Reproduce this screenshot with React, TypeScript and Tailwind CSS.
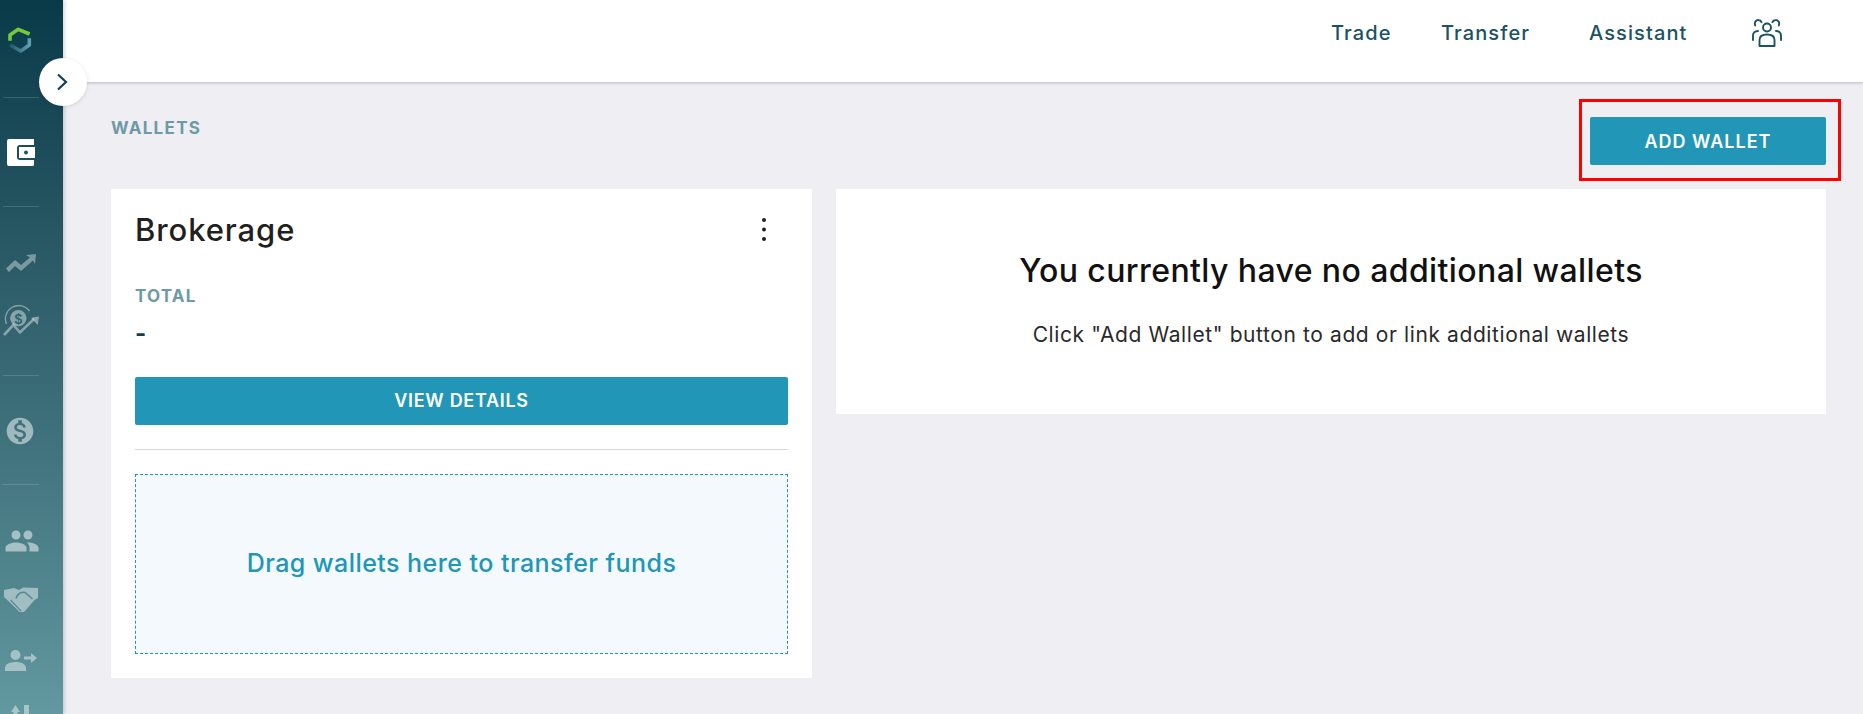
import { MdPeople, MdMonetizationOn } from "react-icons/md";

const font = { fontFamily: '"Inter", "Open Sans", "Liberation Sans", sans-serif' };

function Logo() {
  return (
    <svg width="24" height="26" viewBox="0 0 24 26" fill="none" strokeWidth="3.6" strokeLinejoin="round" className="block">
      <defs>
        <linearGradient id="lg" x1="1" y1="0" x2="0" y2="0">
          <stop offset="0" stopColor="#5c9fb0" />
          <stop offset="1" stopColor="#24596a" />
        </linearGradient>
      </defs>
      <path d="M2 13.7 V8 L10.3 2.3 L21.6 7" stroke="#76c83c" />
      <path d="M21.3 11.3 V18 L12.7 24 L2 18" stroke="url(#lg)" />
    </svg>
  );
}

function Wallet() {
  return (
    <svg width="28" height="27" viewBox="0 0 28 27" className="block">
      <path d="M2 0 H27 V6 H13 Q10 6 10 9 V18 Q10 21 13 21 H27 V26 Q27 27 25 27 H2 Q0 27 0 25 V2 Q0 0 2 0 Z" fill="#fff" />
      <path d="M12 8 H28 V19 H12 Z" fill="#fff" />
      <circle cx="19" cy="13.5" r="2" fill="#1c5563" />
    </svg>
  );
}

function Trend() {
  return (
    <svg width="30" height="18" viewBox="0 0 30 18" className="block" fill="#fff" fillOpacity="0.38">
      <path d="M0 14.5 L9 6 L15 11 L24 3.5 L20 1 L30 0 L29 10 L27 6.5 L15 17 L9 12 L3 18 Z" />
    </svg>
  );
}

function Coin() {
  return (
    <svg width="36" height="31" viewBox="0 0 36 31" className="block" fill="none">
      <path d="M3.5 19 A13.3 13.3 0 0 1 26.5 6" stroke="#fff" strokeOpacity="0.42" strokeWidth="1.3" />
      <circle cx="15.3" cy="13.3" r="8.2" fill="#fff" fillOpacity="0.42" />
      <text x="15.3" y="18.5" textAnchor="middle" fontSize="14" fontWeight="700" fill="#2d6570" fontFamily="Liberation Sans, sans-serif">$</text>
      <path d="M1 30 L10.3 20 L17 27.5 L31 14" stroke="#fff" strokeOpacity="0.42" strokeWidth="2.6" />
      <path d="M28 12.7 L36 11.5 L34.7 20 Z" fill="#fff" fillOpacity="0.42" />
    </svg>
  );
}

function Handshake() {
  return (
    <svg width="34" height="25" viewBox="0 0 34 25" className="block">
      <path d="M0 3 L10 1 L15 3 L19 0.5 L34 1 L34 11 L30.5 13 L20 25 L15.5 25 L8 17.5 L0 10 Z" fill="#fff" fillOpacity="0.45" />
      <path d="M12 11.5 C13.5 6.5 17.5 4.5 21 5.5 L28.5 12" stroke="#548b94" strokeWidth="1.6" fill="none" />
      <path d="M6.5 13 L17 24" stroke="#548b94" strokeWidth="1.2" fill="none" />
    </svg>
  );
}

function UserArrow() {
  return (
    <svg width="32" height="21" viewBox="0 0 32 21" className="block" fill="#fff" fillOpacity="0.45">
      <circle cx="10.5" cy="5" r="5" />
      <path d="M0 21 V18 C0 14 5 12 10.5 12 C16 12 21 14 21 18 V21 Z" />
      <path d="M19 6.5 H26 V3 L32 8 L26 13 V9.5 H19 Z" />
    </svg>
  );
}

function LastIcon() {
  return (
    <svg width="18" height="18" viewBox="0 0 18 18" className="block" fill="#fff" fillOpacity="0.45">
      <path d="M0 7 L4.5 0 L9 7 H6.5 V18 H2.5 V7 Z" />
      <rect x="13" y="0" width="5" height="18" />
    </svg>
  );
}

function HeaderUsers() {
  return (
    <svg width="30" height="28" viewBox="0 0 30 28" fill="none" stroke="#1b5363" strokeWidth="1.9" strokeLinecap="round" strokeLinejoin="round" className="block">
      <circle cx="15" cy="8.5" r="4" />
      <path d="M7.5 27 V21 C7.5 17.5 10.5 15.5 15 15.5 C19.5 15.5 22.5 17.5 22.5 21 V27 Z" />
      <path d="M3.2 6.5 C1.8 3 4.5 0.8 6.5 1 C8 1.1 9 2 9.5 3.2" />
      <path d="M26.8 6.5 C28.2 3 25.5 0.8 23.5 1 C22 1.1 21 2 20.5 3.2" />
      <path d="M1 21 V16.5 C1 14 3 12 6 12" />
      <path d="M29 21 V16.5 C29 14 27 12 24 12" />
    </svg>
  );
}

function Rule({ className }: { className: string }) {
  return <div className={`mx-[3px] h-px w-[36px] bg-white/15 ${className}`} />;
}

export default function App() {
  return (
    <div style={font} className="relative flex h-[714px] w-[1863px] overflow-hidden bg-[#eeeef3]">
      <aside className="z-20 h-full w-[63px] shrink-0 overflow-hidden bg-gradient-to-b from-[#083a48] to-[#62989f] shadow-[2px_0_3px_rgba(0,0,0,0.14)]">
        <div className="ml-[8px] mt-[27px] h-[25px]"><Logo /></div>
        <Rule className="mt-[45px]" />
        <div className="ml-[7px] mt-[41px]"><Wallet /></div>
        <Rule className="mt-[40px]" />
        <div className="ml-[6px] mt-[47px]"><Trend /></div>
        <div className="ml-[3px] mt-[33px]"><Coin /></div>
        <Rule className="mt-[39px]" />
        <div className="ml-[6px] mt-[41px] h-[28px] text-white/50"><MdMonetizationOn size={32} className="-m-[2px]" /></div>
        <Rule className="mt-[41px]" />
        <div className="ml-[4px] mt-[45px] h-[22px] text-white/50"><MdPeople size={36} className="-mt-[7px]" /></div>
        <div className="ml-[4px] mt-[42px] h-[26px]"><Handshake /></div>
        <div className="ml-[5px] mt-[37px]"><UserArrow /></div>
        <div className="ml-[11px] mt-[34px]"><LastIcon /></div>
      </aside>

      <div className="absolute left-[39px] top-[58px] z-30 flex h-[48px] w-[48px] items-center justify-center rounded-full bg-white pr-[2px] shadow-[0_1px_4px_rgba(0,0,0,0.12)]">
        <svg width="12" height="18" viewBox="0 0 12 18" fill="none" stroke="#0f4252" strokeWidth="2.2" className="block">
          <path d="M2 1.5 L10 9 L2 16.5" />
        </svg>
      </div>

      <div className="flex min-w-0 flex-1 flex-col">
        <header className="z-10 flex h-[82px] shrink-0 items-center bg-white pb-[16px] pl-[1268px] text-[20px] font-medium tracking-[1.1px] text-[#1b5363] shadow-[0_1px_3px_rgba(0,0,0,0.22)]">
          <span className="w-[110px]">Trade</span>
          <span className="w-[148px]">Transfer</span>
          <span className="w-[163px]">Assistant</span>
          <HeaderUsers />
        </header>

        <main className="flex-1 pl-[48px] pr-[37px]">
          <div className="flex h-[107px] items-start justify-between">
            <h1 className="mt-[36px] text-[17px] font-bold leading-[20px] tracking-[1.3px] text-[#6d9aa6]">WALLETS</h1>
            <div className="-mr-[15px] mt-[17px] border-[3px] border-[#ff0000] pb-[13px] pl-[8px] pr-[12px] pt-[15px]">
              <button className="flex h-[48px] w-[236px] items-center justify-center rounded-[2px] bg-[#2196b6] text-[18px] font-semibold tracking-[1px] text-white">ADD WALLET</button>
            </div>
          </div>

          <div className="flex items-start gap-[24px]">
            <section className="h-[489px] w-[701px] bg-white px-[24px]">
              <div className="flex items-start justify-between">
                <h2 className="mt-[23px] text-[31px] font-medium leading-[36px] tracking-[0.9px] text-[#211f20]">Brokerage</h2>
                <svg width="6" height="23" viewBox="0 0 6 23" className="mr-[21px] mt-[29px] block" fill="#211f20">
                  <circle cx="3" cy="2" r="2" /><circle cx="3" cy="11.5" r="2" /><circle cx="3" cy="21" r="2" />
                </svg>
              </div>
              <div className="mt-[38px] text-[17px] font-bold leading-[20px] tracking-[1.2px] text-[#6d9aa6]">TOTAL</div>
              <div className="mt-[13px] text-[24px] font-bold leading-[30px] text-[#123f4d]">-</div>
              <button className="mt-[28px] flex h-[48px] w-full items-center justify-center rounded-[2px] bg-[#2196b6] pb-[2px] text-[18px] font-semibold tracking-[0.7px] text-white">VIEW DETAILS</button>
              <div className="mt-[24px] h-px w-full bg-[#d8d8d8]" />
              <div className="mt-[24px] flex h-[180px] items-center justify-center border border-dashed border-[#2196b6] bg-[#f3f9fc] text-[25px] font-medium tracking-[0.45px] text-[#2196b6]">
                Drag wallets here to transfer funds
              </div>
            </section>

            <section className="flex h-[225px] flex-1 flex-col items-center bg-white">
              <h2 className="mt-[63px] text-[32px] font-medium leading-[38px] tracking-[0.4px] text-[#111111]">You currently have no additional wallets</h2>
              <p className="mt-[31px] text-[21px] leading-[28px] tracking-[0.6px] text-[#2a2a2a]">Click "Add Wallet" button to add or link additional wallets</p>
            </section>
          </div>
        </main>
      </div>
    </div>
  );
}
